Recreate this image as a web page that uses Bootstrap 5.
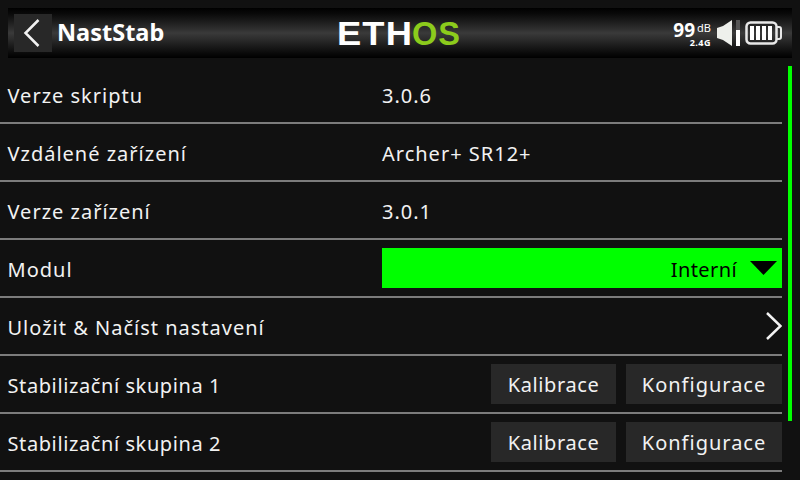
<!DOCTYPE html>
<html lang="cs">
<head>
<meta charset="utf-8">
<title>NastStab</title>
<link rel="stylesheet" href="https://cdn.jsdelivr.net/npm/bootstrap@5.3.0/dist/css/bootstrap.min.css">
<style>
html,body{width:800px;height:480px;overflow:hidden;background:#111;margin:0}
body{font-family:"Noto Sans",sans-serif;color:#f2f2f2;font-size:20px;letter-spacing:1px}
.scr-top{height:50px;margin:8px 8px 0;background:linear-gradient(#000 0,#0a0a0a 12%,#2c2c2c 40%,#3a3a3a 50%,#2c2c2c 62%,#0a0a0a 90%,#000 100%)}
.back-box{width:38px;height:38px;margin-left:6px;background:#282828}
.title-txt{font-weight:700;font-size:23.5px;letter-spacing:0;color:#fff;margin-left:5px;width:280px}
.logo-svg{width:128px;height:36px;display:block}
.logo-svg text{font-family:"Liberation Sans",sans-serif;font-size:33px;font-weight:700}
.stat-box{margin-right:10px;gap:5px}
.rssi{width:40px;color:#fff;text-align:right;margin-right:1px}
.rssi-top{height:17px;line-height:17px}
.rssi-n{font-size:19px;font-weight:700;letter-spacing:0}
.rssi-u{font-size:11px;letter-spacing:0;vertical-align:5px;margin-left:2px}
.rssi-b{height:9px;line-height:9px;font-size:9px;font-weight:700;margin-top:2px;letter-spacing:.5px}
.body-wrap{margin-top:8px}
.rows-col{width:782px}
.set-row{height:58px;border-bottom:2px solid #7c7c7c;padding-left:7.5px}
.set-name{width:374.5px;flex:none;padding-top:4px}
.lbl-txt{padding-top:4px}
.lbl-tight{padding-top:4px;letter-spacing:.6px}
.dd-box{width:400px;height:40px;background:#0f0;color:#000;padding-right:5px;gap:13px}
.dd-val{padding-top:4px;letter-spacing:.4px}
.btn-pair{column-gap:10px}
.act-btn{height:40px;background:#282828;color:#f2f2f2;border:0;border-radius:0;padding:2px 0 0;font-size:20px;letter-spacing:1px}
.act-btn:hover{background:#282828;color:#f2f2f2}
.w-cal{width:125px;letter-spacing:.6px}
.w-cfg{width:156px}
.scroll-rail{width:4px;height:355px;background:#0f0;margin-left:6px}
</style>
</head>
<body>
<header class="scr-top d-flex align-items-center">
  <div class="back-box d-flex align-items-center justify-content-center">
    <svg width="20" height="30" viewBox="0 0 20 30"><path d="M15.500 2 2.500 15 15.500 28" fill="none" stroke="#f2f2f2" stroke-width="2.500"/></svg>
  </div>
  <div class="title-txt">NastStab</div>
  <svg class="logo-svg" viewBox="0 0 128 36">
    <text x="0" y="30" textLength="76" lengthAdjust="spacingAndGlyphs" fill="#fff">ETH</text>
    <text x="75" y="30" textLength="49" lengthAdjust="spacingAndGlyphs" fill="#8ccb1c">OS</text>
  </svg>
  <div class="stat-box ms-auto d-flex align-items-center">
    <div class="rssi">
      <div class="rssi-top"><span class="rssi-n">99</span><span class="rssi-u">dB</span></div>
      <div class="rssi-b">2.4G</div>
    </div>
    <svg width="23" height="26" viewBox="0 0 23 26"><path d="M0 8 6 6 15 0V26L6 20 0 18Z" fill="#eef0ec"/><rect x="19" y="0" width="4" height="10" fill="#555"/><rect x="19" y="10" width="4" height="16" fill="#fff"/></svg>
    <svg width="37" height="24" viewBox="0 0 37 24"><rect x="1.500" y="1.500" width="30" height="21" rx="4" fill="none" stroke="#e8e8e8" stroke-width="2.500"/><path d="M32 6h2a2 2 0 0 1 2 2v8a2 2 0 0 1-2 2h-2" fill="none" stroke="#e8e8e8" stroke-width="2"/><g fill="#fff"><rect x="5" y="5" width="4" height="14"/><rect x="11" y="5" width="4" height="14"/><rect x="17" y="5" width="4" height="14"/><rect x="23" y="5" width="4" height="14"/></g></svg>
  </div>
</header>
<main class="body-wrap d-flex">
  <div class="rows-col">
    <div class="set-row d-flex align-items-center"><div class="set-name">Verze skriptu</div><div class="lbl-txt">3.0.6</div></div>
    <div class="set-row d-flex align-items-center"><div class="set-name">Vzdálené zařízení</div><div class="lbl-txt">Archer+ SR12+</div></div>
    <div class="set-row d-flex align-items-center"><div class="set-name">Verze zařízení</div><div class="lbl-txt">3.0.1</div></div>
    <div class="set-row d-flex align-items-center"><div class="set-name">Modul</div>
      <div class="dd-box d-flex align-items-center justify-content-end"><span class="dd-val">Interní</span><svg width="27" height="14" viewBox="0 0 27 14"><path d="M0 0H27L13.500 14Z" fill="#000"/></svg></div>
    </div>
    <div class="set-row d-flex align-items-center justify-content-between"><div class="lbl-txt">Uložit &amp; Načíst nastavení</div>
      <svg width="16" height="28" viewBox="0 0 16 28"><path d="M1 1 14.500 14 1 27" fill="none" stroke="#f2f2f2" stroke-width="2.500"/></svg>
    </div>
    <div class="set-row d-flex align-items-center"><div class="lbl-tight">Stabilizační skupina 1</div><div class="btn-pair ms-auto d-flex"><button class="btn act-btn w-cal">Kalibrace</button><button class="btn act-btn w-cfg">Konfigurace</button></div></div>
    <div class="set-row d-flex align-items-center"><div class="lbl-tight">Stabilizační skupina 2</div><div class="btn-pair ms-auto d-flex"><button class="btn act-btn w-cal">Kalibrace</button><button class="btn act-btn w-cfg">Konfigurace</button></div></div>
  </div>
  <div class="scroll-rail"></div>
</main>
</body>
</html>
